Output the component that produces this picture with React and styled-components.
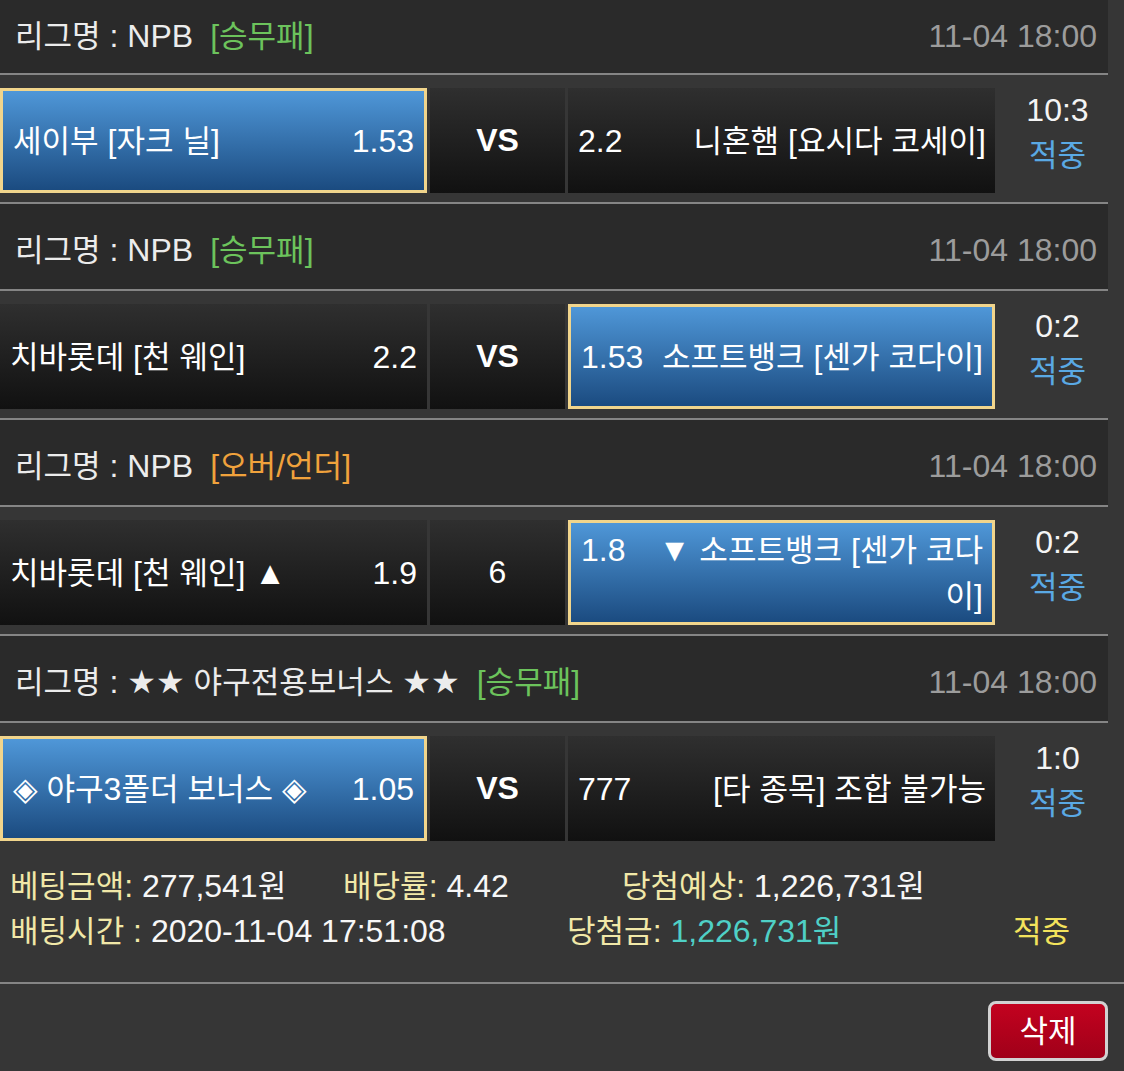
import React from 'react';
import styled, { createGlobalStyle, css } from 'styled-components';

const GlobalStyle = createGlobalStyle`
  * { box-sizing: border-box; }
  body {
    margin: 0;
    background: #363636;
    color: #f4f4f4;
    font-family: "Liberation Sans", "DejaVu Sans", "Noto Sans CJK KR", sans-serif;
    font-size: 32px;
  }
`;

// hangul in the shot runs a bit narrower than Noto CJK at the same size
const HANGUL = /([\uAC00-\uD7A3]+)/;

const Ko = styled.span`
  font-family: "Noto Sans CJK KR", sans-serif;
  font-size: 0.97em;
  line-height: 1;
`;

const T = ({ children }) =>
  String(children)
    .split(HANGUL)
    .map((part, i) => (HANGUL.test(part) ? <Ko key={i}>{part}</Ko> : part));

const Board = styled.div`
  width: 1108px;
`;

const LeagueBar = styled.div`
  display: flex;
  align-items: center;
  justify-content: space-between;
  height: ${(p) => (p.$first ? 75 : 87)}px;
  padding: ${(p) => (p.$first ? '0 11px 0 15px' : '7px 11px 0 15px')};
  background: #2a2a2a;
  border-bottom: 2px solid #858585;
`;

const LeagueName = styled.span`
  color: #ececec;
`;

const Market = styled.span`
  margin-left: 17px;
  color: ${(p) => (p.$tone === 'orange' ? '#f0a23c' : '#6cc35c')};
`;

const KickOff = styled.span`
  color: #9c9c9c;
`;

const MatchRow = styled.div`
  display: flex;
  align-items: flex-start;
  padding: 13px 0 9px;
  border-bottom: ${(p) => (p.$last ? 'none' : '2px solid #858585')};
`;

const Cell = styled.div`
  height: 105px;
  color: #fff;
  background: linear-gradient(#2f2f2f, #111111);
  ${(p) =>
    p.$picked &&
    css`
      background: linear-gradient(#4f97d8, #1b4b80);
      border: 3px solid #f1d58c;
    `}
`;

const HomeCell = styled(Cell)`
  width: 427px;
  display: flex;
  align-items: center;
  justify-content: space-between;
  padding: 0 10px;
  line-height: 46px;
`;

const MidCell = styled(Cell)`
  width: 135px;
  margin: 0 3px;
  display: flex;
  align-items: center;
  justify-content: center;
  font-weight: ${(p) => (p.$bold ? 700 : 400)};
`;

const AwayCell = styled(Cell)`
  width: 427px;
  display: flex;
  align-items: center;
  padding: 0 9px 0 10px;
  line-height: 46px;
`;

const AwayText = styled.div`
  flex: 1;
  display: flow-root;
  text-align: right;
`;

const AwayOdds = styled.span`
  float: left;
  margin-right: 8px;
`;

const Result = styled.div`
  flex: 1;
  padding-left: 12px;
  text-align: center;
  line-height: 45px;
`;

const Hit = styled.div`
  color: ${(p) => p.$color || '#5aa9e4'};
`;

const Summary = styled.div`
  padding: 14px 0 28px 10px;
  border-bottom: 2px solid #858585;
  line-height: 45px;
`;

const SummaryLine = styled.div`
  display: grid;
  grid-template-columns: ${(p) => p.$cols};
  white-space: nowrap;
`;

const Label = styled.span`
  color: #f1e8a8;
`;

const Value = styled.span`
  color: ${(p) => (p.$tone === 'cyan' ? '#4fd0c6' : '#f7f7f7')};
`;

const Actions = styled.div`
  display: flex;
  justify-content: flex-end;
  padding: 17px 16px 10px;
`;

const DeleteButton = styled.button`
  width: 120px;
  height: 60px;
  border: 3px solid #d2d2d2;
  border-radius: 8px;
  background: linear-gradient(#c3021f, #a00019);
  color: #fff;
  font-family: inherit;
  font-size: 32px;
  cursor: pointer;
`;

const bets = [
  {
    league: 'NPB', market: '[승무패]', tone: 'green', time: '11-04 18:00',
    home: '세이부 [자크 닐]', homeOdds: '1.53', mid: 'VS',
    awayOdds: '2.2', away: '니혼햄 [요시다 코세이]', score: '10:3', pick: 'home',
  },
  {
    league: 'NPB', market: '[승무패]', tone: 'green', time: '11-04 18:00',
    home: '치바롯데 [천 웨인]', homeOdds: '2.2', mid: 'VS',
    awayOdds: '1.53', away: '소프트뱅크 [센가 코다이]', score: '0:2', pick: 'away',
  },
  {
    league: 'NPB', market: '[오버/언더]', tone: 'orange', time: '11-04 18:00',
    home: '치바롯데 [천 웨인] ▲', homeOdds: '1.9', mid: '6',
    awayOdds: '1.8', away: '▼ 소프트뱅크 [센가 코다이]', score: '0:2', pick: 'away',
  },
  {
    league: '★★ 야구전용보너스 ★★', market: '[승무패]', tone: 'green', time: '11-04 18:00',
    home: '◈ 야구3폴더 보너스 ◈', homeOdds: '1.05', mid: 'VS',
    awayOdds: '777', away: '[타 종목] 조합 불가능', score: '1:0', pick: 'home',
  },
];

const App = () => {
  return (
    <>
      <GlobalStyle />
      <Board>
        {bets.map((b, i) => (
          <React.Fragment key={i}>
            <LeagueBar $first={i === 0}>
              <span>
                <LeagueName><T>{`리그명 : ${b.league}`}</T></LeagueName>
                <Market $tone={b.tone}><T>{b.market}</T></Market>
              </span>
              <KickOff>{b.time}</KickOff>
            </LeagueBar>
            <MatchRow $last={i === bets.length - 1}>
              <HomeCell $picked={b.pick === 'home'}>
                <span><T>{b.home}</T></span>
                <span>{b.homeOdds}</span>
              </HomeCell>
              <MidCell $bold={b.mid === 'VS'}>{b.mid}</MidCell>
              <AwayCell $picked={b.pick === 'away'}>
                <AwayText>
                  <AwayOdds>{b.awayOdds}</AwayOdds>
                  <T>{b.away}</T>
                </AwayText>
              </AwayCell>
              <Result>
                <div>{b.score}</div>
                <Hit><T>적중</T></Hit>
              </Result>
            </MatchRow>
          </React.Fragment>
        ))}
      </Board>
      <Summary>
        <SummaryLine $cols="333px 279px 1fr">
          <span><Label><T>베팅금액:</T></Label> <Value><T>277,541원</T></Value></span>
          <span><Label><T>배당률:</T></Label> <Value>4.42</Value></span>
          <span><Label><T>당첨예상:</T></Label> <Value><T>1,226,731원</T></Value></span>
        </SummaryLine>
        <SummaryLine $cols="557px 446px 1fr">
          <span><Label><T>배팅시간 :</T></Label> <Value>2020-11-04 17:51:08</Value></span>
          <span><Label><T>당첨금:</T></Label> <Value $tone="cyan"><T>1,226,731원</T></Value></span>
          <Hit as="span" $color="#f3e35c"><T>적중</T></Hit>
        </SummaryLine>
      </Summary>
      <Actions>
        <DeleteButton><T>삭제</T></DeleteButton>
      </Actions>
    </>
  );
};

export default App;
